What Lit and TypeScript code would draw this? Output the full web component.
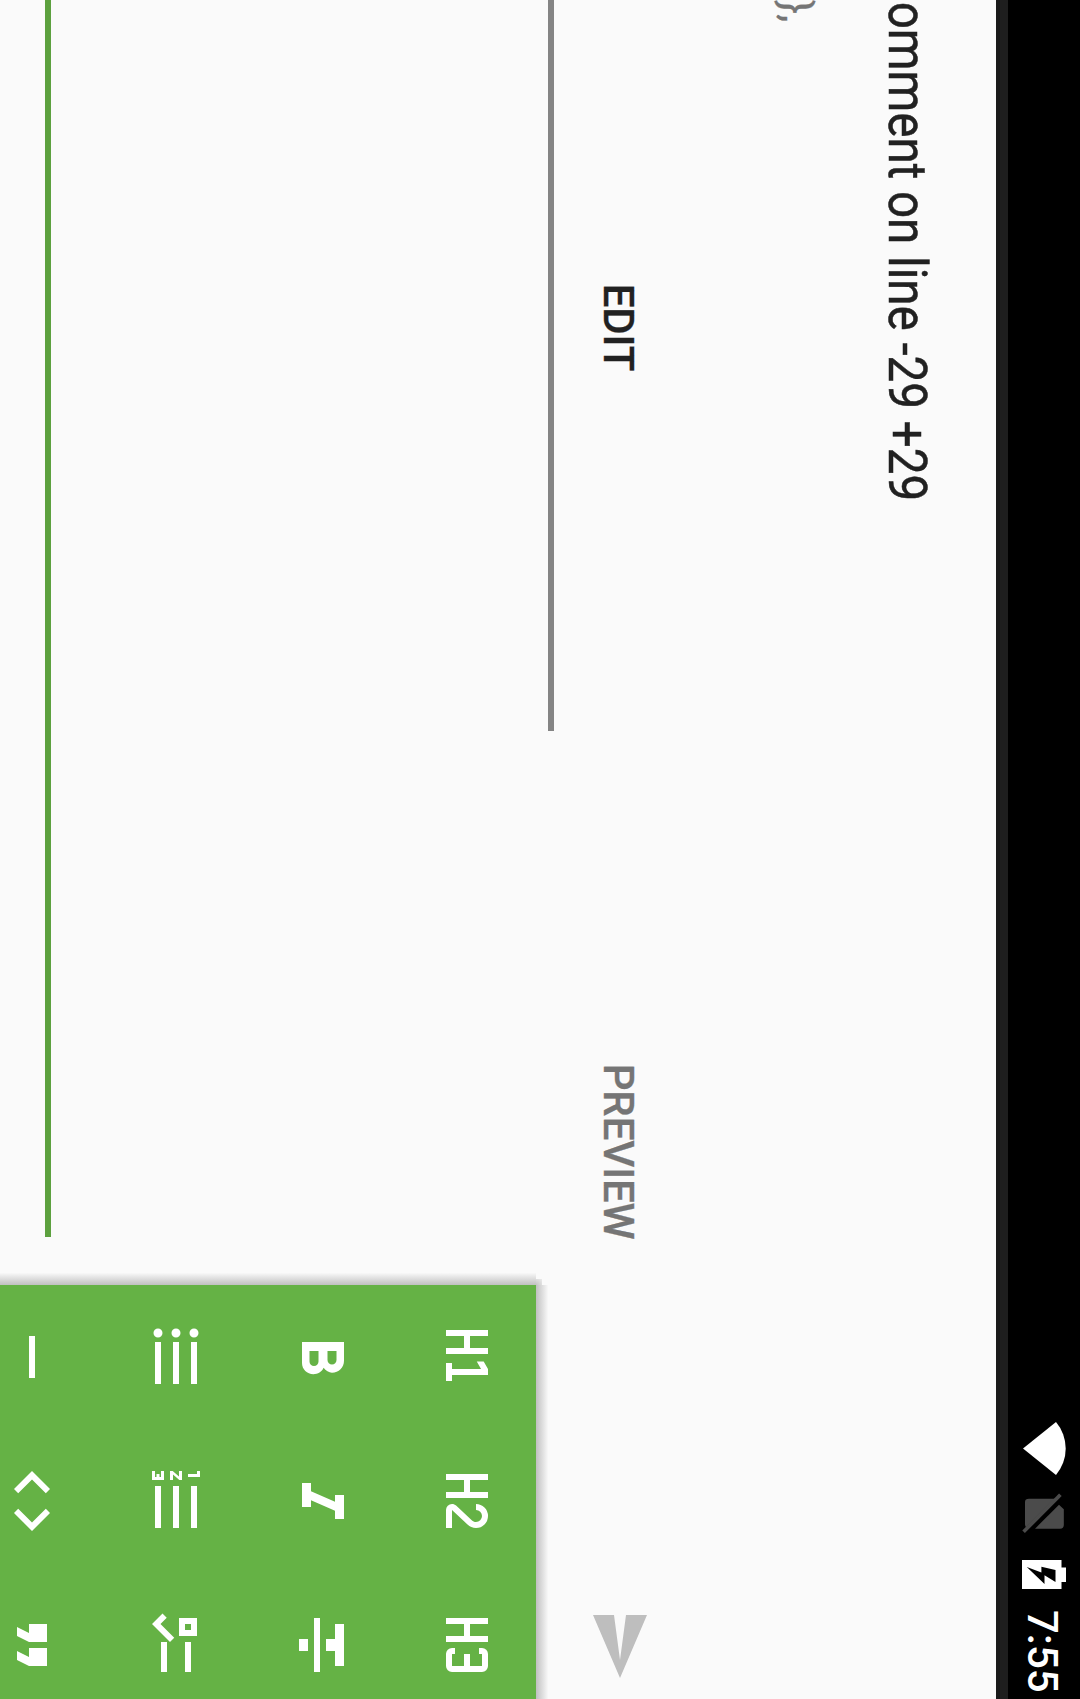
import { LitElement, html, css, svg } from "lit";
import { customElement } from "lit/decorators.js";

const H = "M3,4H5V10H9V4H11V18H9V12H5V18H3V4";

const TOOLS: { name: string; d: string }[] = [
  { name: "h1", d: H + "M14,18V16H16V6.31L13.5,7.75V5.44L16,4H18V16H20V18H14Z" },
  { name: "h2", d: H + "M21,18H15A2,2 0 0,1 13,16C13,15.47 13.2,15 13.54,14.64L18.41,9.41C18.78,9.05 19,8.55 19,8A2,2 0 0,0 17,6A2,2 0 0,0 15,8H13A4,4 0 0,1 17,4A4,4 0 0,1 21,8C21,9.1 20.55,10.1 19.83,10.83L15,16H21V18Z" },
  { name: "h3", d: H + "M15,4H19A2,2 0 0,1 21,6V16A2,2 0 0,1 19,18H15A2,2 0 0,1 13,16V15H15V16H19V12H15V10H19V6H15V7H13V6A2,2 0 0,1 15,4Z" },
  { name: "bold", d: "M13.5,15.5H10V12.5H13.5A1.5,1.5 0 0,1 15,14A1.5,1.5 0 0,1 13.5,15.5M10,6.5H13A1.5,1.5 0 0,1 14.5,8A1.5,1.5 0 0,1 13,9.5H10M15.6,10.79C16.57,10.11 17.25,9 17.25,8C17.25,5.74 15.5,4 13.25,4H7V18H14.04C16.14,18 17.75,16.3 17.75,14.21C17.75,12.69 16.89,11.39 15.6,10.79Z" },
  { name: "italic", d: "M10,4V7H12.21L8.79,15H6V18H14V15H11.79L15.21,7H18V4H10Z" },
  { name: "strike", d: "M3,14H21V12H3M5,4V7H10V10H14V7H19V4M10,19H14V16H10V19Z" },
  { name: "bullets", d: "M7,5H21V7H7V5M7,13V11H21V13H7M4,4.5A1.5,1.5 0 0,1 5.5,6A1.5,1.5 0 0,1 4,7.5A1.5,1.5 0 0,1 2.5,6A1.5,1.5 0 0,1 4,4.5M4,10.5A1.5,1.5 0 0,1 5.5,12A1.5,1.5 0 0,1 4,13.5A1.5,1.5 0 0,1 2.5,12A1.5,1.5 0 0,1 4,10.5M7,19V17H21V19H7M4,16.5A1.5,1.5 0 0,1 5.5,18A1.5,1.5 0 0,1 4,19.5A1.5,1.5 0 0,1 2.5,18A1.5,1.5 0 0,1 4,16.5Z" },
  { name: "numbers", d: "M7,13H21V11H7M7,19H21V17H7M7,7H21V5H7M2,11H3.8L2,13.1V14H5V13H3.2L5,10.9V10H2M3,8H4V4H2V5H3M2,17H4V17.5H3V18.5H4V19H2V20H5V16H2V17Z" },
  { name: "checks", d: "M3,5H9V11H3V5M5,7V9H7V7H5M11,7H21V9H11V7M11,15H21V17H11V15M5,20L1.5,16.5L2.91,15.09L5,17.17L9.59,12.59L11,14L5,20Z" },
  { name: "rule", d: "M19,13H5V11H19V13Z" },
  { name: "code", d: "M14.6,16.6L19.2,12L14.6,7.4L16,6L22,12L16,18L14.6,16.6M9.4,16.6L4.8,12L9.4,7.4L8,6L2,12L8,18L9.4,16.6Z" },
  { name: "quote", d: "M14,17H17L19,13V7H13V13H16M6,17H9L11,13V7H5V13H8L6,17Z" },
];

const SEND = "M2,21L23,12L2,3V10L17,12L2,14V21Z";

@customElement("app-root")
export class AppRoot extends LitElement {
  static styles = css`
    :host {
      display: block;
      width: 1080px;
      height: 1699px;
      overflow: hidden;
      background: #fafafa;
      font-family: Roboto, "Liberation Sans", sans-serif;
    }
    /* The device is held sideways: a landscape screen turned clockwise. */
    .screen {
      width: 1699px;
      height: 1080px;
      transform-origin: 0 0;
      transform: translateX(1080px) rotate(90deg);
      display: flex;
      flex-direction: column;
      background: #fafafa;
      overflow: hidden;
      white-space: nowrap;
    }
    .status {
      flex: none;
      height: 72px;
      background: #000;
      display: flex;
      justify-content: flex-end;
      color: #fff;
    }
    .signals { flex: none; width: 189px; height: 72px; display: block; }
    .clock {
      width: 90px;
      box-sizing: border-box;
      padding-left: 1px;
      font-size: 42px;
      font-weight: 500;
      line-height: 75px;
    }
    .edge {
      flex: none;
      height: 12px;
      background: linear-gradient(#1e1e1e 0 8px, #191919 8px);
    }
    .heading { flex: none; height: 156px; }
    .title {
      padding: 56px 0 0 2px;
      font-size: 54.5px;
      line-height: 64px;
      color: #212121;
      -webkit-text-stroke: 0.5px #212121;
      transform-origin: 0 0;
      transform: scaleX(0.872);
    }
    .context {
      flex: none;
      height: 148px;
      padding-top: 19px;
      box-sizing: border-box;
      font-size: 42px;
      line-height: 50px;
      color: #757575;
      -webkit-text-stroke: 0.3px #757575;
    }
    .tabs {
      flex: none;
      height: 144px;
      display: flex;
      font-size: 42px;
      font-weight: 500;
      letter-spacing: -0.15px;
      color: #757575;
    }
    .tab {
      box-sizing: border-box;
      height: 144px;
      line-height: 148px;
      text-align: center;
      -webkit-text-stroke: 0.3px currentColor;
    }
    .tab.edit {
      width: 731px;
      padding-right: 76px;
      color: #212121;
      border-bottom: 6px solid #848484;
    }
    .tab.preview { width: 843px; padding-right: 2px; }
    .send { width: 125px; display: flex; padding: 36px 0 0 35px; box-sizing: border-box; }
    .icon { width: 72px; height: 72px; display: block; }
    .body { flex: 1; display: flex; justify-content: space-between; padding-top: 12px; min-height: 0; }
    .editor { width: 1237px; height: 491px; box-sizing: border-box; border-bottom: 6px solid #5ca03e; }
    .tools {
      position: relative;
      width: 414px;
      display: grid;
      grid-template-columns: repeat(3, 144px);
      grid-auto-rows: 144px;
      background: #65b245;
    }
    .tool { display: grid; place-items: center; }
    .shade-left {
      position: absolute;
      left: -12px;
      top: 0;
      width: 12px;
      bottom: 0;
      background: linear-gradient(to left, #c0c0c0, #dcdcdc 50%, #f8f8f8);
    }
    .shade-top {
      position: absolute;
      left: 0;
      right: 0;
      top: -12px;
      height: 12px;
      background: linear-gradient(to top, #c0c0c0, #dcdcdc 50%, #f8f8f8);
    }
    .shade-corner {
      position: absolute;
      left: -6px;
      top: -6px;
      width: 6px;
      height: 6px;
      background: radial-gradient(circle at 100% 100%, #c4c4c4, #ececec);
    }
  `;

  private icon(d: string, fill = "#fff") {
    return html`<svg class="icon" viewBox="0 0 24 24" fill=${fill}>${svg`<path d=${d} />`}</svg>`;
  }

  render() {
    return html`
      <div class="screen">
        <div class="status">
          <svg class="signals" viewBox="1420 0 189 72">
            <path fill="#fff" d="M1448.5,57L1422,24A41,41 0 0 1 1475,24Z" />
            <path fill="#4b4b4b" d="M1498.7,25L1527.3,54Q1526,55 1524,55H1502Q1498.7,55 1498.7,51Z" />
            <path fill="#4b4b4b" d="M1504.7,21L1509.3,16.2H1525Q1528.7,16.2 1528.7,20V45Z" />
            <path stroke="#4b4b4b" stroke-width="3.7" d="M1494.8,19.6L1531.7,56.4" />
            <path fill="#fff" d="M1560,58V18.5H1567.5V14H1582V18.5H1589V58Z" />
            <path fill="#000" d="M1567,53.2L1572.5,38.6H1566.7L1569.9,24.5H1582L1575.2,35.5H1584Z" />
          </svg>
          <div class="clock">7:55</div>
        </div>
        <div class="edge"></div>
        <div class="heading"><div class="title">omment on line -29 +29</div></div>
        <div class="context">},</div>
        <div class="tabs">
          <div class="tab edit">EDIT</div>
          <div class="tab preview">PREVIEW</div>
          <div class="send">${this.icon(SEND, "#bebebe")}</div>
        </div>
        <div class="body">
          <div class="editor"></div>
          <div class="tools">
            <div class="shade-left"></div>
            <div class="shade-top"></div>
            <div class="shade-corner"></div>
            ${TOOLS.map((t) => html`<div class="tool">${this.icon(t.d)}</div>`)}
          </div>
        </div>
      </div>
    `;
  }
}
